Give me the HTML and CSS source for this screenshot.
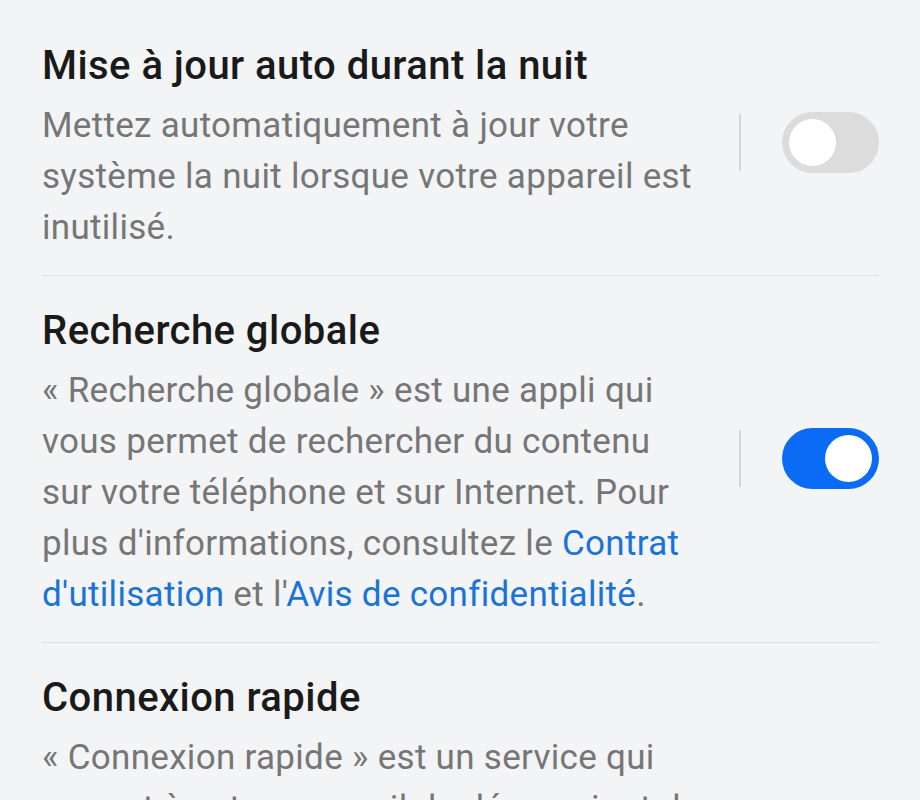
FILE: index.html
```html
<!DOCTYPE html>
<html lang="fr">
<head>
<meta charset="utf-8">
<link rel="stylesheet" href="styles.css">
</head>
<body>
<div class="list">
  <div class="row">
    <div class="text">
      <div class="title">Mise à jour auto durant la nuit</div>
      <div class="desc">Mettez automatiquement à jour votre système la nuit lorsque votre appareil est inutilisé.</div>
    </div>
    <div class="sep"></div>
    <div class="switch"><div class="knob"></div></div>
  </div>
  <div class="row">
    <div class="text">
      <div class="title">Recherche globale</div>
      <div class="desc">« Recherche globale » est une appli qui vous permet de rechercher du contenu sur votre téléphone et sur Internet. Pour plus d'informations, consultez le <span class="link">Contrat d'utilisation</span> et l'<span class="link">Avis de confidentialité</span>.</div>
    </div>
    <div class="sep"></div>
    <div class="switch on"><div class="knob"></div></div>
  </div>
  <div class="row">
    <div class="text">
      <div class="title">Connexion rapide</div>
      <div class="desc">« Connexion rapide » est un service qui permet à votre appareil de découvrir et de se connecter rapidement aux appareils à proximité, comme les écouteurs, les montres connectées, les tablettes et les autres appareils compatibles de votre entourage.</div>
    </div>
    <div class="sep"></div>
    <div class="switch on"><div class="knob"></div></div>
  </div>
</div>
</body>
</html>
```
FILE: styles.css
```css
html, body {
  margin: 0;
  padding: 0;
  background: #f3f4f6;
  height: 100%;
  overflow: hidden;
}
body {
  font-family: Roboto, "Noto Sans", sans-serif;
}
.list {
  padding: 11px 41px 0 42px;
}
.row {
  display: flex;
  align-items: center;
  padding: 31px 0 22px;
  border-bottom: 1px solid #dfe0e2;
}
.text {
  width: 660px;
  flex: none;
}
.title {
  font-size: 40px;
  font-weight: 500;
  line-height: 48px;
  letter-spacing: 0.45px;
  color: #1a1a1a;
}
.desc {
  margin-top: 10px;
  font-size: 35px;
  line-height: 51px;
  letter-spacing: 0.3px;
  color: #767676;
}
.link {
  color: #1a73d8;
}
.sep {
  width: 2px;
  height: 57px;
  background: #d6d6d6;
  margin-left: auto;
  margin-right: 41px;
  margin-bottom: 10px;
  flex: none;
}
.switch {
  width: 97px;
  height: 61px;
  border-radius: 31px;
  background: #dcdcdd;
  flex: none;
  display: flex;
  align-items: center;
  padding: 0 7px;
  box-sizing: border-box;
  margin-bottom: 10px;
}
.knob {
  width: 47px;
  height: 47px;
  border-radius: 50%;
  background: #ffffff;
}
.switch.on {
  background: #0a6cf5;
  justify-content: flex-end;
}
```
